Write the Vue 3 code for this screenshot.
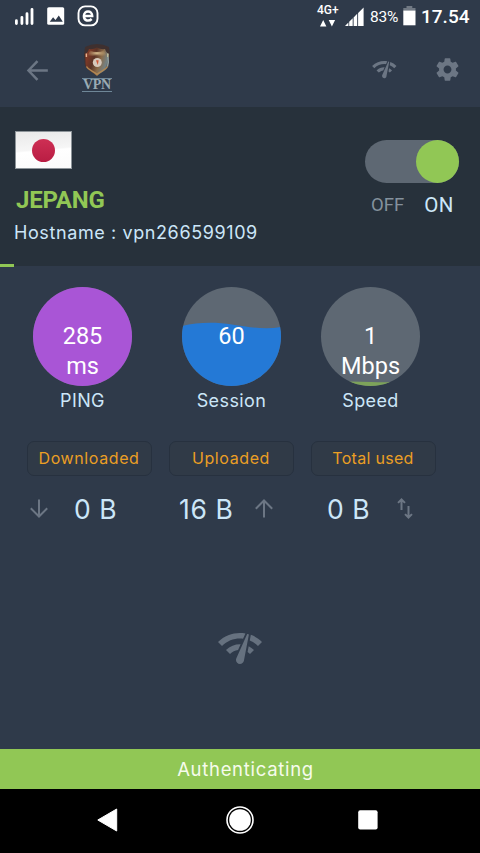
<template>
  <div class="screen">
    <div class="status">
      <svg class="status-left" width="90" height="33" viewBox="0 0 90 33">
        <g stroke="#fff" stroke-width="2.8" stroke-linecap="round">
          <path d="M3.4 20.7v2.8M8.9 17.3v6.2M14 13.7v9.8M19 9.3v14.2" />
        </g>
        <rect x="34.2" y="7.2" width="17" height="17.6" rx="1.6" fill="#fff" />
        <path d="M36.7 21.7l3.4-4.4 2.4 2.6 3.3-4.4 4 6.2z" fill="#2f3a4a" />
        <rect x="65.5" y="6.4" width="19" height="19" rx="6.6" fill="none" stroke="#fff" stroke-width="1.9" />
        <path d="M71 16h8.2c0-6-8.3-6-8.3 0 0 5.3 5.2 5.5 7.8 3" fill="none" stroke="#fff" stroke-width="2.5" />
      </svg>
      <div class="net">
        <span>4G+</span>
        <svg width="17" height="7" viewBox="0 0 17 7" fill="#fff">
          <path d="M0 6.5L3.2 0l3.2 6.5zM8.7 0h6.4l-3.2 6.5z" />
        </svg>
      </div>
      <svg class="cell" width="20" height="20" viewBox="0 0 20 20" fill="#fff">
        <path d="M0 19l3.4-3.4V19zM4.2 14.8l3.5-3.5V19H4.2zM8.6 10.4l3.6-3.6V19H8.6zM13.1 5.9L18.6.6V19h-5.5z" />
      </svg>
      <span class="percent">83%</span>
      <svg class="battery" width="13" height="20" viewBox="0 0 13 20">
        <path d="M3.5 0h5.8v2h3.2v3H.3V2h3.2z" fill="#717984" />
        <path d="M.3 4.6h12.2v14.7H.3z" fill="#fff" />
      </svg>
      <span class="clock">17.54</span>
    </div>

    <div class="appbar">
      <svg class="back" width="31" height="31" viewBox="0 0 24 24">
        <path d="M20 11.1H7.2l5.5-5.7-1.4-1.3L3.7 12l7.6 7.9 1.4-1.3-5.5-5.7H20z" />
      </svg>
      <div class="logo">
        <svg width="30" height="34" viewBox="0 0 30 34">
          <defs>
            <linearGradient id="bronze" x1="0" y1="0.3" x2="1" y2="0.7">
              <stop offset="0" stop-color="#8a3b26" />
              <stop offset="0.35" stop-color="#5a3326" />
              <stop offset="0.6" stop-color="#8a6a48" />
              <stop offset="0.85" stop-color="#728184" />
              <stop offset="1" stop-color="#54352a" />
            </linearGradient>
            <radialGradient id="shine" cx="0.5" cy="0.4" r="0.6">
              <stop offset="0" stop-color="#dcc193" />
              <stop offset="1" stop-color="#b08d60" stop-opacity="0" />
            </radialGradient>
          </defs>
          <path d="M3 3Q15-3 27 3l1 8-1 11-12 10L3 22 2 11z" fill="#3f302f" />
          <path d="M15 3.5c-3 1.5-5 2-8 1.500-1 3-2 4-4 5 1 4 0 8 1 13 2 4 7 5 11 9 4-4 9-5 11-9 1-5 0-9 1-13-2-1-3-2-4-5-3 .5-5 0-8-1.500z" fill="url(#bronze)" />
          <path d="M8 6.500q7 3 14 0l3 6.500q-10-3-20 0z" fill="url(#shine)" />
          <path d="M4.500 22.500c2 4 7 4.500 10.500 8 3.500-3.500 8.500-4 10.500-8" fill="none" stroke="#b08753" stroke-width="1.400" />
          <path d="M26 13q1 5-.5 9.500" fill="none" stroke="#91a2a3" stroke-width="1.300" />
          <path d="M4.400 9.500V13" stroke="#e8b590" stroke-width="1.400" />
          <path d="M25.800 9.500V13" stroke="#cfc9a0" stroke-width="1.200" />
          <circle cx="15.300" cy="18.500" r="4.500" fill="#d6c8bb" />
          <path d="M14 16.300h2.600l-.3 2.200-.5 2.500-1-2.500z" fill="#cf5838" />
        </svg>
        <span>VPN</span>
      </div>
      <svg class="check" width="26.6" height="26.6" viewBox="0 0 24 24"><path :d="networkCheck" /></svg>
      <svg class="gear" width="27" height="27" viewBox="0 0 24 24">
        <path d="M19.43 12.98c.04-.32.07-.64.07-.98s-.03-.66-.07-.98l2.11-1.65c.19-.15.24-.42.12-.64l-2-3.46c-.12-.22-.39-.3-.61-.22l-2.49 1c-.52-.4-1.08-.73-1.69-.98l-.38-2.65C14.46 2.18 14.25 2 14 2h-4c-.25 0-.46.18-.49.42l-.38 2.65c-.61.25-1.17.59-1.69.98l-2.49-1c-.23-.09-.49 0-.61.22l-2 3.46c-.13.22-.07.49.12.64l2.11 1.65c-.04.32-.07.65-.07.98s.03.66.07.98l-2.11 1.65c-.19.15-.24.42-.12.64l2 3.46c.12.22.39.3.61.22l2.49-1c.52.4 1.08.73 1.69.98l.38 2.65c.03.24.24.42.49.42h4c.25 0 .46-.18.49-.42l.38-2.65c.61-.25 1.17-.59 1.69-.98l2.49 1c.23.09.49 0 .61-.22l2-3.46c.12-.22.07-.49-.12-.64l-2.11-1.65zM12 15.5c-1.93 0-3.5-1.57-3.5-3.5s1.57-3.5 3.5-3.5 3.5 1.57 3.5 3.5-1.57 3.5-3.5 3.5z" />
      </svg>
    </div>

    <div class="server">
      <div class="server-info">
        <div class="flag"><i></i></div>
        <div class="country">JEPANG</div>
        <div class="host">Hostname : vpn266599109</div>
      </div>
      <div class="power">
        <div :class="['switch', { on: isOn }]" @click="isOn = !isOn"><i></i></div>
        <div class="power-labels">
          <span :class="{ active: !isOn }">OFF</span>
          <span :class="{ active: isOn }">ON</span>
        </div>
      </div>
    </div>
    <div class="progress"><i :style="{ width: progress + '%' }"></i></div>

    <div class="gauges">
      <div v-for="g in gauges" :key="g.label" class="gauge">
        <div class="circle">
          <svg width="99" height="99" viewBox="0 0 99 99"><path :d="g.wave" :fill="g.color" /></svg>
          <div class="value">{{ g.value }}<template v-if="g.unit"><br>{{ g.unit }}</template></div>
        </div>
        <div class="gauge-label">{{ g.label }}</div>
      </div>
    </div>

    <div class="pills">
      <div v-for="t in traffic" :key="t.label" :class="['pill', t.name]">{{ t.label }}</div>
    </div>
    <div class="amounts">
      <div v-for="t in traffic" :key="t.label" :class="['amount', t.name]">
        <span>{{ t.amount }}</span>
        <svg width="20" height="22" viewBox="0 0 20 22"><path :d="t.icon" /></svg>
      </div>
    </div>

    <div class="center">
      <svg width="48" height="48" viewBox="0 0 24 24"><path :d="networkCheck" /></svg>
    </div>

    <div class="state">Authenticating</div>
    <div class="nav">
      <svg width="24" height="28" viewBox="0 0 24 28"><path d="M.8 14L19.7 3v22z" fill="#fff" stroke="#fff" stroke-linejoin="round" /></svg>
      <svg width="28" height="28" viewBox="0 0 28 28">
        <circle cx="14" cy="14" r="13" fill="none" stroke="#fff" stroke-width="1.6" />
        <circle cx="14" cy="14" r="10.8" fill="#fff" />
      </svg>
      <svg width="20" height="20" viewBox="0 0 20 20"><rect x=".2" y=".2" width="19.4" height="19.4" rx="2" fill="#fff" /></svg>
    </div>
  </div>
</template>

<script setup>
import { ref } from 'vue'

const isOn = ref(true)
const progress = ref(3)

const networkCheck = 'M15.9 5c-.17 0-.32.09-.41.23l-.07.15-5.18 11.65c-.16.29-.26.61-.26.96 0 1.11.9 2.01 2.01 2.01.96 0 1.77-.68 1.96-1.59l.01-.03L16.4 5.5c0-.28-.22-.5-.5-.5zM1 9l2 2c2.88-2.88 6.79-4.08 10.53-3.62l1.19-2.68C9.89 3.84 4.74 5.27 1 9zm20 2l2-2c-1.64-1.64-3.55-2.82-5.59-3.57l-.53 2.82c1.5.62 2.9 1.53 4.12 2.75zm-4 4l2-2c-.8-.8-1.7-1.42-2.66-1.89l-.55 2.92c.42.27.83.59 1.21.97zM5 13l2 2c1.13-1.13 2.56-1.79 4.03-2l1.28-2.88c-2.63-.08-5.3.87-7.31 2.88z'

const gauges = [
  { label: 'PING', value: '285', unit: 'ms', color: '#a955d6', wave: 'M0 0h99v99H0z' },
  { label: 'Session', value: '60', unit: '', color: '#2479d6', wave: 'M0 39C16 35 34 35 50 37.500S82 43 99 40V99H0z' },
  { label: 'Speed', value: '1', unit: 'Mbps', color: '#7da35a', wave: 'M0 95Q30 94 50 95T99 94V99H0z' },
]

const traffic = [
  { name: 'down', label: 'Downloaded', amount: '0 B', icon: 'M10 1.500v17M1.800 10.300L10 18.500l8.200-8.200' },
  { name: 'up', label: 'Uploaded', amount: '16 B', icon: 'M10 19.500v-17M1.800 10.700L10 2.500l8.200 8.200' },
  { name: 'total', label: 'Total used', amount: '0 B', icon: 'M6.500 12V1.500M3 4.900l3.500-3.400L10 4.900M13.500 8v11.500M10 16.100l3.500 3.400 3.500-3.400' },
]
</script>

<style>
body {
  margin: 0;
  background: #000;
}
</style>

<style scoped>
.screen {
  display: flex;
  flex-direction: column;
  width: 480px;
  height: 853px;
  overflow: hidden;
  background: #2f3a4a;
  color: #cce6f8;
  font-family: Inter, 'Liberation Sans', sans-serif;
}
.screen svg {
  display: block;
  flex: none;
}
.status {
  display: flex;
  height: 33px;
  color: #fff;
  font-family: Roboto, sans-serif;
}
.status-left {
  margin-left: 13px;
}
.net {
  width: 25px;
  margin: 4px 0 0 214px;
  font-size: 12px;
  font-weight: 500;
  line-height: 13px;
}
.net svg {
  margin: 3px 0 0 3px;
}
.cell {
  margin: 7px 0 0 3px;
}
.percent {
  width: 30px;
  margin: 8px 0 0 5px;
  font-size: 15.5px;
  letter-spacing: -0.2px;
  line-height: 18px;
}
.battery {
  margin: 6px 0 0 3px;
}
.clock {
  margin: 5px 0 0 5px;
  font-size: 19px;
  font-weight: 500;
  line-height: 24px;
}
.appbar {
  display: flex;
  align-items: center;
  height: 74px;
  fill: #6c7684;
}
.back {
  margin-left: 22px;
}
.logo {
  display: flex;
  flex-direction: column;
  align-items: center;
  width: 32px;
  margin: -4px 258px 0 28px;
}
.logo span {
  width: 30px;
  border: solid #6f8798;
  border-width: 1px 0;
  color: #9aabb3;
  font: bold 14px/12px 'Liberation Serif', serif;
  letter-spacing: -0.3px;
  text-align: center;
}
.check {
  margin-top: -1px;
}
.gear {
  margin: -1px 0 0 36.500px;
}
.server {
  display: flex;
  justify-content: space-between;
  height: 157px;
  background: #27313b;
}
.server-info {
  padding: 24px 0 0 14px;
}
.flag {
  display: flex;
  align-items: center;
  justify-content: center;
  box-sizing: border-box;
  width: 57px;
  height: 38px;
  margin-left: 1px;
  border: 1px solid #8d9499;
  background: linear-gradient(175deg, #e9e9e9, #f6f6f6 48%, #fff 52%, #fbfbfb);
}
.flag i {
  width: 23px;
  height: 23px;
  border-radius: 50%;
  background: linear-gradient(#ce2f54, #b91d43);
}
.country {
  margin: 17px 0 0 2px;
  color: #91c755;
  font: bold 24px/28px Roboto, sans-serif;
  letter-spacing: -0.2px;
}
.host {
  margin-top: 6px;
  font-size: 18px;
  letter-spacing: 0.6px;
  line-height: 26px;
  white-space: nowrap;
}
.power {
  width: 94px;
  padding: 33px 21px 0 0;
}
.switch {
  display: flex;
  height: 43px;
  border-radius: 22px;
  background: #5e6873;
}
.switch.on {
  justify-content: flex-end;
}
.switch i {
  width: 43px;
  border-radius: 50%;
  background: #91c755;
}
.power-labels {
  display: flex;
  justify-content: space-between;
  padding: 10px 5px 0 6px;
  color: #84919d;
  font: 18.500px/24px Roboto, sans-serif;
}
.power-labels .active {
  color: #cce6f8;
  font-size: 20.500px;
  letter-spacing: 0.5px;
}
.progress {
  height: 3px;
  background: linear-gradient(#27313b 2px, #2f3a4a 2px);
}
.progress i {
  display: block;
  height: 100%;
  background: #91c755;
}
.gauges {
  display: grid;
  grid-template-columns: 99px 99px 99px;
  column-gap: 50px;
  padding: 19.500px 0 0 33px;
}
.gauge:last-child {
  margin-left: -10px;
  margin-right: 10px;
}
.circle {
  display: grid;
  width: 99px;
  height: 99px;
  overflow: hidden;
  border-radius: 50%;
  background: #5e6873;
}
.circle > * {
  grid-area: 1 / 1;
}
.value {
  padding-top: 34.500px;
  color: #fff;
  font: 23.500px/30px Roboto, sans-serif;
  text-align: center;
}
.gauge-label {
  margin-top: 3px;
  font-size: 18px;
  letter-spacing: 0.4px;
  line-height: 24px;
  text-align: center;
}
.pills {
  display: flex;
  gap: 17px;
  padding: 28px 0 0 26.500px;
}
.pill {
  box-sizing: border-box;
  width: 125px;
  height: 35.500px;
  border: 1.500px solid #27313f;
  border-radius: 7px;
  background: #303a47;
  color: #eb9f24;
  font-size: 16px;
  letter-spacing: 0.6px;
  line-height: 33.500px;
  text-align: center;
}
.pill.total {
  letter-spacing: 0.3px;
}
.amounts {
  display: flex;
  height: 34px;
  padding: 16px 0 0 29px;
  font-size: 26.500px;
  letter-spacing: 0.6px;
  line-height: 34px;
}
.amount {
  display: flex;
  align-items: center;
}
.amount svg {
  fill: none;
  stroke: #6c7684;
  stroke-width: 2;
}
.amount.down {
  flex-direction: row-reverse;
  justify-content: flex-end;
  gap: 25px;
  width: 150px;
}
.amount.up {
  gap: 21px;
  width: 148px;
}
.amount.total {
  gap: 25px;
}
.center {
  display: flex;
  flex: 1;
  justify-content: center;
  padding-top: 98px;
  fill: #66717f;
}
.state {
  height: 40px;
  padding-left: 11px;
  background: #91c755;
  color: #f6fbec;
  font-size: 18.500px;
  letter-spacing: 0.7px;
  line-height: 41px;
  text-align: center;
}
.nav {
  display: flex;
  align-items: center;
  justify-content: space-between;
  box-sizing: border-box;
  height: 64px;
  padding: 0 102px 2px 97px;
  background: #000;
}
</style>
